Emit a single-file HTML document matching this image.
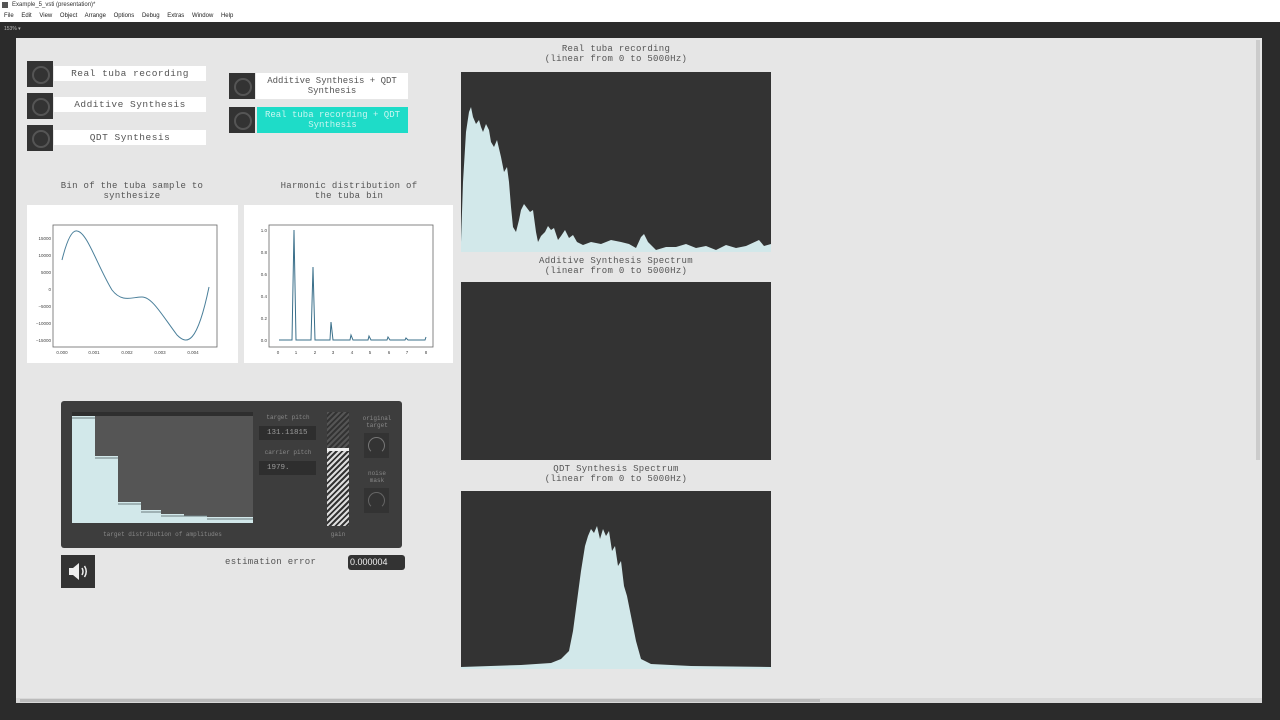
<!DOCTYPE html>
<html><head><meta charset="utf-8"><style>
*{margin:0;padding:0;box-sizing:border-box}
body{width:1280px;height:720px;overflow:hidden;background:#e6e6e6;font-family:"Liberation Mono",monospace;position:relative}
.a{position:absolute}
.ui{font-family:"Liberation Sans",sans-serif}
.tog{position:absolute;width:26px;height:26px;background:#333}
.tog:after{content:"";position:absolute;left:5px;top:5px;width:14px;height:14px;border:2px solid #555;border-radius:50%}
.lbl{position:absolute;background:#fff;color:#555;font-size:9.5px;text-align:center;letter-spacing:0.5px;line-height:10px;white-space:nowrap}
.t{position:absolute;color:#555;font-size:9px;text-align:center;line-height:10px;letter-spacing:0.3px}
.spec{position:absolute;background:#333}
.s{position:absolute;color:#888;font-size:6px;text-align:center;line-height:7px}
</style></head><body>
<div class="a ui" style="left:0;top:0;width:1280px;height:10px;background:#fff;font-size:6px;color:#333;padding-left:12px;line-height:10px">Example_5_vsti (presentation)*</div>
<div class="a" style="left:2px;top:2px;width:6px;height:6px;background:#555"></div>
<div class="a ui" style="left:0;top:10px;width:1280px;height:12px;background:#fff;font-size:6px;color:#222;line-height:12px;padding-left:4px;word-spacing:6px">File Edit View Object Arrange Options Debug Extras Window Help</div>
<div class="a" style="left:0;top:22px;width:1280px;height:16px;background:#2b2b2b"></div>
<div class="a ui" style="left:4px;top:26px;font-size:5px;color:#bbb">153% ▾</div>
<div class="a" style="left:0;top:38px;width:16px;height:665px;background:#2b2b2b"></div>
<div class="a" style="left:1262px;top:38px;width:18px;height:665px;background:#2b2b2b"></div>
<div class="a" style="left:1256px;top:40px;width:4px;height:420px;background:#ccc"></div>
<div class="a" style="left:0;top:703px;width:1280px;height:17px;background:#2b2b2b"></div>
<div class="a" style="left:16px;top:698px;width:1246px;height:5px;background:#d8d8d8"></div>
<div class="a" style="left:20px;top:699px;width:800px;height:3px;background:#bbb"></div>

<div class="tog" style="left:27px;top:61px"></div><div class="lbl" style="left:54px;top:66px;width:152px;height:15px;line-height:15px">Real tuba recording</div>
<div class="tog" style="left:27px;top:93px"></div><div class="lbl" style="left:54px;top:97px;width:152px;height:15px;line-height:15px">Additive Synthesis</div>
<div class="tog" style="left:27px;top:125px"></div><div class="lbl" style="left:54px;top:130px;width:152px;height:15px;line-height:15px">QDT Synthesis</div>
<div class="tog" style="left:229px;top:73px"></div><div class="lbl" style="left:256px;top:73px;width:152px;height:26px;padding-top:3px;letter-spacing:0;font-size:9px">Additive Synthesis + QDT<br>Synthesis</div>
<div class="tog" style="left:229px;top:107px"></div><div class="lbl" style="left:257px;top:107px;width:151px;height:26px;padding-top:3px;background:#1edcc8;color:#c8f5f0;letter-spacing:0;font-size:9px">Real tuba recording + QDT<br>Synthesis</div>

<div class="t" style="left:40px;top:181px;width:184px">Bin of the tuba sample to<br>synthesize</div>
<div class="t" style="left:260px;top:181px;width:178px">Harmonic distribution of<br>the tuba bin</div>

<div class="a" style="left:27px;top:205px;width:211px;height:158px;background:#fff"></div>
<div class="a" style="left:244px;top:205px;width:209px;height:158px;background:#fff"></div>
<svg class="a" style="left:27px;top:205px" width="426" height="158">
<rect x="26" y="20" width="164" height="122" fill="none" stroke="#666" stroke-width="0.8"/>
<path d="M35 55 C40 35 45 25 50 26 C60 27 70 60 85 85 C95 98 105 92 115 92 C125 92 135 110 150 130 C160 140 170 140 182 82" fill="none" stroke="#4a7f9a" stroke-width="1"/>
<g font-size="4.5" fill="#444" font-family="Liberation Sans" text-anchor="end">
<text x="24" y="35">15000</text><text x="24" y="52">10000</text><text x="24" y="69">5000</text><text x="24" y="86">0</text><text x="24" y="103">−5000</text><text x="24" y="120">−10000</text><text x="24" y="137">−15000</text></g>
<g font-size="4.5" fill="#444" font-family="Liberation Sans" text-anchor="middle">
<text x="35" y="149">0.000</text><text x="67" y="149">0.001</text><text x="100" y="149">0.002</text><text x="133" y="149">0.003</text><text x="166" y="149">0.004</text></g>
<rect x="242" y="20" width="164" height="122" fill="none" stroke="#666" stroke-width="0.8"/>
<path d="M252 135 L265 135 L267 25 L269 135 L284 135 L286 62 L288 135 L303 135 L304 117 L306 135 L323 135 L324 130 L326 135 L341 135 L342 131 L344 135 L360 135 L361 132 L363 135 L378 135 L379 133 L381 135 L398 135 L399 132" fill="none" stroke="#3a6f8a" stroke-width="1"/>
<g font-size="4.5" fill="#444" font-family="Liberation Sans" text-anchor="end">
<text x="240" y="27">1.0</text><text x="240" y="49">0.8</text><text x="240" y="71">0.6</text><text x="240" y="93">0.4</text><text x="240" y="115">0.2</text><text x="240" y="137">0.0</text></g>
<g font-size="4.5" fill="#444" font-family="Liberation Sans" text-anchor="middle">
<text x="251" y="149">0</text><text x="269" y="149">1</text><text x="288" y="149">2</text><text x="306" y="149">3</text><text x="325" y="149">4</text><text x="343" y="149">5</text><text x="362" y="149">6</text><text x="380" y="149">7</text><text x="399" y="149">8</text></g>
</svg>

<div class="a" style="left:61px;top:401px;width:341px;height:147px;background:#3d3d3d;border-radius:3px"></div>
<div class="a" style="left:72px;top:412px;width:181px;height:111px;background:#555;border-top:4px solid #2e2e2e"></div>
<svg class="a" style="left:72px;top:416px" width="181" height="107">
<path d="M0 0 H23 V40 H46 V86 H69 V94 H89 V98 H112 V100 H135 V101 H181 V107 H0Z" fill="#d2e8ea"/>
<g stroke="#6c7c7e" stroke-width="1"><line x1="0" y1="2" x2="23" y2="2"/><line x1="23" y1="42" x2="46" y2="42"/><line x1="46" y1="88" x2="69" y2="88"/><line x1="69" y1="96" x2="89" y2="96"/><line x1="89" y1="100" x2="135" y2="100"/><line x1="135" y1="103" x2="181" y2="103"/></g>
</svg>
<div class="s" style="left:72px;top:531px;width:181px">target distribution of amplitudes</div>
<div class="s" style="left:258px;top:414px;width:60px">target pitch</div>
<div class="a" style="left:259px;top:426px;width:57px;height:14px;background:#2e2e2e;color:#999;font-size:7.5px;line-height:14px;padding-left:8px">131.11815</div>
<div class="s" style="left:258px;top:449px;width:60px">carrier pitch</div>
<div class="a" style="left:259px;top:461px;width:57px;height:14px;background:#2e2e2e;color:#999;font-size:7.5px;line-height:14px;padding-left:8px">1979.</div>
<div class="a" style="left:327px;top:412px;width:22px;height:114px;background:repeating-linear-gradient(135deg,#555 0 2px,#333 2px 4px)"></div>
<div class="a" style="left:327px;top:448px;width:22px;height:78px;background:repeating-linear-gradient(135deg,#ddd 0 2px,#333 2px 4px);border-top:3px solid #eee"></div>
<div class="s" style="left:327px;top:531px;width:22px">gain</div>
<div class="s" style="left:358px;top:415px;width:38px">original<br>target</div>
<div class="a" style="left:364px;top:433px;width:25px;height:25px;background:#333"><div class="a" style="left:4px;top:4px;width:17px;height:17px;border:1.5px solid #777;border-bottom-color:transparent;border-radius:50%"></div></div>
<div class="s" style="left:358px;top:470px;width:38px">noise<br>mask</div>
<div class="a" style="left:364px;top:488px;width:25px;height:25px;background:#333"><div class="a" style="left:4px;top:4px;width:17px;height:17px;border:1.5px solid #666;border-bottom-color:transparent;border-radius:50%"></div></div>

<div class="a" style="left:61px;top:555px;width:34px;height:33px;background:#333"></div>
<svg class="a" style="left:61px;top:555px" width="34" height="33"><path d="M8 13 H12 L18 8 V25 L12 20 H8Z" fill="#eee"/><path d="M21 13 Q23 16.5 21 20 M23.5 11 Q27 16.5 23.5 22" fill="none" stroke="#eee" stroke-width="1.5"/></svg>
<div class="t" style="left:225px;top:557px;width:93px;text-align:left">estimation error</div>
<div class="a ui" style="left:348px;top:555px;width:57px;height:15px;background:#333;border-radius:3px;color:#eee;font-size:9px;line-height:15px;padding-left:2px">0.000004</div>

<div class="t" style="left:461px;top:44px;width:310px">Real tuba recording<br>(linear from 0 to 5000Hz)</div>
<div class="spec" style="left:461px;top:72px;width:310px;height:180px"></div>
<svg class="a" style="left:461px;top:72px" width="310" height="180">
<path d="M0 170 L2 110 L5 60 L8 40 L10 35 L12 45 L15 52 L18 48 L20 55 L22 60 L25 52 L28 58 L30 70 L33 75 L36 68 L40 85 L43 100 L46 95 L48 110 L50 135 L52 155 L55 160 L58 148 L60 138 L63 132 L66 136 L69 140 L72 138 L75 160 L77 170 L80 164 L84 160 L87 154 L90 158 L93 156 L97 168 L100 164 L104 158 L108 166 L112 163 L116 170 L122 173 L130 170 L140 172 L150 168 L160 170 L168 172 L175 176 L180 165 L183 162 L187 170 L195 178 L205 175 L215 175 L225 172 L235 176 L245 174 L255 178 L265 173 L275 176 L285 174 L298 168 L303 174 L310 172 V180 H0Z" fill="#d2e8ea"/></svg>
<div class="t" style="left:461px;top:256px;width:310px">Additive Synthesis Spectrum<br>(linear from 0 to 5000Hz)</div>
<div class="spec" style="left:461px;top:282px;width:310px;height:178px"></div>
<div class="t" style="left:461px;top:464px;width:310px">QDT Synthesis Spectrum<br>(linear from 0 to 5000Hz)</div>
<div class="spec" style="left:461px;top:491px;width:310px;height:178px"></div>
<svg class="a" style="left:461px;top:491px" width="310" height="178">
<path d="M0 178 L0 176 L60 174 L90 172 L100 168 L108 160 L112 140 L116 110 L120 80 L124 55 L127 45 L130 38 L133 42 L136 35 L139 48 L142 38 L145 45 L148 40 L151 60 L154 55 L157 75 L160 70 L163 95 L166 105 L170 125 L175 150 L180 168 L190 173 L230 175 L310 176 V178Z" fill="#d2e8ea"/></svg>
</body></html>
